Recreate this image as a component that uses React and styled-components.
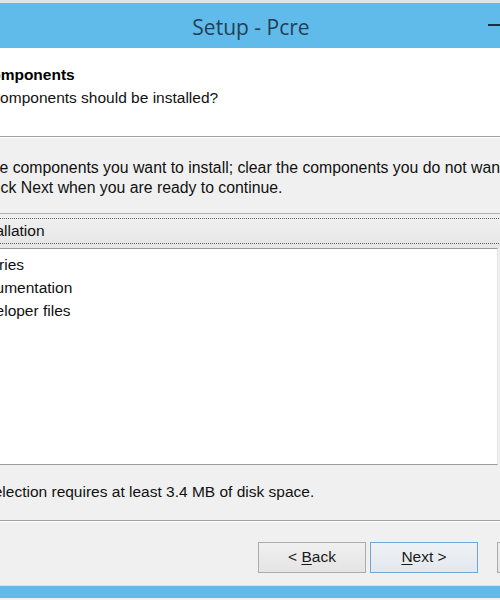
import styled, { createGlobalStyle } from "styled-components";

const GlobalStyle = createGlobalStyle`
  html, body {
    margin: 0;
    padding: 0;
    overflow: hidden;
    background: #f0f0f0;
  }
  body {
    font-family: "Liberation Sans", Arial, sans-serif;
  }
`;

const components = ["Binaries", "Documentation", "Developer files"];

const App = () => {
  return (
    <>
      <GlobalStyle />
      <Window>
        <TopEdge />
        <TitleBar>
          <span />
          <Title>Setup - Pcre</Title>
          <Controls>
            <CtrlButton>
              <MinDash />
            </CtrlButton>
            <CtrlButton />
            <CtrlButton $wide />
          </Controls>
        </TitleBar>
        <Header>
          <HeaderTitle>Select Components</HeaderTitle>
          <HeaderDesc>Which components should be installed?</HeaderDesc>
        </Header>
        <Separator />
        <Body>
          <IntroLine>
            Select the components you want to install; clear the components you do not want to
          </IntroLine>
          <IntroLine $shift={-5}>install. Click Next when you are ready to continue.</IntroLine>
          <Combo>
            <Focus>Full installation</Focus>
          </Combo>
          <List>
            {components.map((c) => (
              <Item key={c}>
                <Check />
                <span>{c}</span>
              </Item>
            ))}
          </List>
          <Space>Current selection requires at least 3.4 MB of disk space.</Space>
        </Body>
        <Separator />
        <Footer>
          <Button>
            &lt;&nbsp;<u>B</u>ack
          </Button>
          <Button $default>
            <u>N</u>ext&nbsp;&gt;
          </Button>
          <Button $gap>Cancel</Button>
        </Footer>
        <BottomEdge />
      </Window>
    </>
  );
};

const Window = styled.div`
  width: 720px;
  margin-left: -100px;
  display: flex;
  flex-direction: column;
  background: #f0f0f0;
  color: #111;
  font-size: 15.5px;
`;

const TopEdge = styled.div`
  height: 3px;
  background: #dde5ec;
`;

const TitleBar = styled.div`
  height: 45px;
  box-sizing: border-box;
  background: #60bbea;
  padding: 2px 20px 0 0;
  display: grid;
  grid-template-columns: 1fr auto 1fr;
  align-items: center;
`;

const Title = styled.div`
  font-family: "Open Sans", "Noto Sans", sans-serif;
  font-size: 21px;
  color: #243f55;
  padding-left: 2px;
`;

const Controls = styled.div`
  display: flex;
  justify-content: flex-end;
  align-self: stretch;
`;

const CtrlButton = styled.div`
  width: ${(p) => (p.$wide ? "46px" : "40px")};
  display: flex;
  align-items: center;
  justify-content: center;
  padding-bottom: 4px;
`;

const MinDash = styled.div`
  width: 12px;
  height: 2px;
  background: #1b2f40;
`;

const Header = styled.div`
  height: 88px;
  box-sizing: border-box;
  background: #ffffff;
  padding: 18px 0 0 30px;
`;

const HeaderTitle = styled.div`
  font-weight: bold;
  line-height: 18px;
  color: #000;
`;

const HeaderDesc = styled.div`
  line-height: 18px;
  margin-top: 5px;
  padding-left: 15px;
`;

const Separator = styled.div`
  height: 1px;
  background: #a0a0a0;
  border-bottom: 1px solid #ffffff;
`;

const Body = styled.div`
  height: 382px;
  box-sizing: border-box;
  padding: 20px 0 0 38px;
  display: flex;
  flex-direction: column;
`;

const IntroLine = styled.div`
  font-size: 15.8px;
  line-height: 20px;
  white-space: nowrap;
  margin-left: ${(p) => p.$shift || 0}px;
`;

const Combo = styled.div`
  margin-top: 15px;
  width: 640px;
  height: 35px;
  box-sizing: border-box;
  border: 1px solid #adadad;
  border-bottom: none;
  background: linear-gradient(#f0f0f0, #e6e6e6);
  padding: 4px 4px 4px 3px;
  display: flex;
`;

const Focus = styled.div`
  flex: 1;
  border-top: 1px dotted #5a5a5a;
  border-bottom: 1px dotted #5a5a5a;
  display: flex;
  align-items: center;
  padding-bottom: 1px;
`;

const List = styled.div`
  width: 560px;
  height: 217px;
  box-sizing: border-box;
  border: 1px solid #9a9a9a;
  border-right-color: #e4e4e4;
  background: #ffffff;
  padding-top: 4px;
  display: flex;
  flex-direction: column;
`;

const Item = styled.div`
  height: 23px;
  display: flex;
  align-items: center;
  gap: 7px;
  padding-left: 9px;
`;

const Check = styled.div`
  width: 13px;
  height: 13px;
  box-sizing: border-box;
  border: 1px solid #707070;
  background: #fff;
`;

const Space = styled.div`
  margin: 17px 0 0 -8px;
  line-height: 20px;
`;

const Footer = styled.div`
  height: 64px;
  box-sizing: border-box;
  padding: 20px 15px 0 0;
  display: flex;
  justify-content: flex-end;
  align-items: flex-start;
  gap: 4px;
`;

const Button = styled.div`
  width: 108px;
  height: 31px;
  box-sizing: border-box;
  margin-left: ${(p) => (p.$gap ? "15px" : "0")};
  border: 1px solid ${(p) => (p.$default ? "#6fa7da" : "#acacac")};
  background: ${(p) =>
    p.$default
      ? "linear-gradient(#eef2f6, #e3e8ee)"
      : "linear-gradient(#f0f0f0, #e4e4e4)"};
  display: flex;
  align-items: center;
  justify-content: center;
  padding-bottom: 1px;
  color: #1a1a1a;

  u {
    text-decoration-thickness: 1px;
    text-underline-offset: 2px;
  }
`;

const BottomEdge = styled.div`
  height: 12px;
  background: #60bbea;
  border-top: 1px solid #c9e6f5;
  margin-top: -1px;
`;

export default App;
